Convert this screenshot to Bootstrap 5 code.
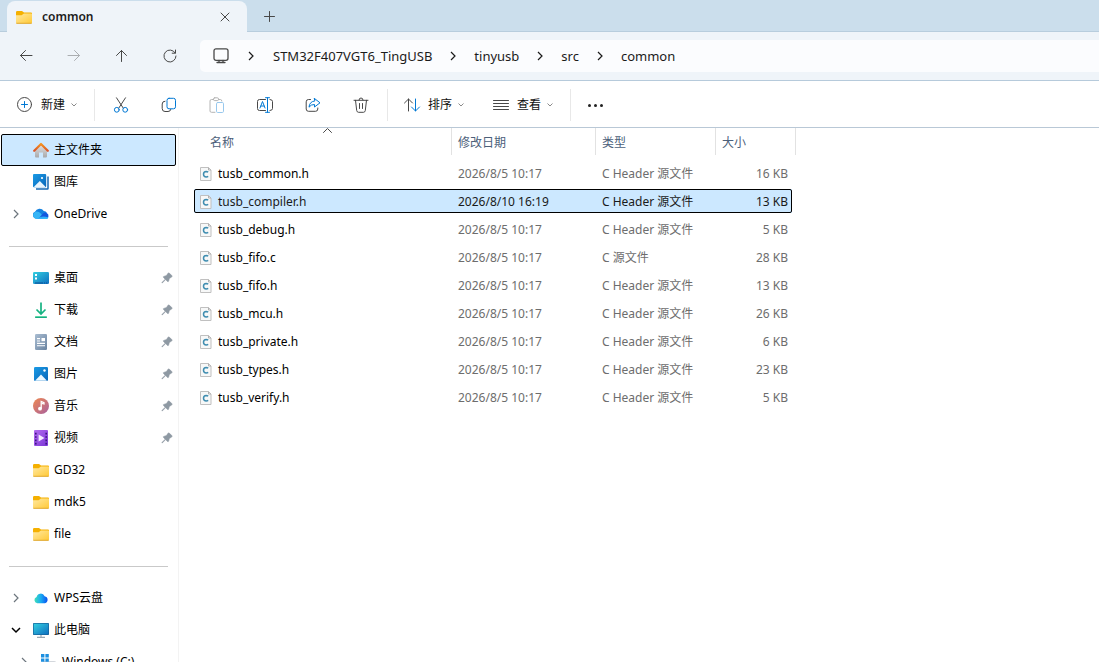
<!DOCTYPE html>
<html lang="zh-CN">
<head>
<meta charset="utf-8">
<meta name="viewport" content="width=device-width, initial-scale=1">
<title>common</title>
<link href="https://cdn.jsdelivr.net/npm/bootstrap@5.3.0/dist/css/bootstrap.min.css" rel="stylesheet">
<style>
  body { font-family: "Noto Sans", "Noto Sans CJK SC", sans-serif; font-size: 12px; line-height: 16px; color: #000; background: #fff; }
  svg { display: block; flex: none; }
  button { color: inherit; }
  .plain-btn { border: 0; background: none; padding: 0; display: flex; align-items: center; justify-content: center; }
  .plain-btn:hover { background: rgba(0, 0, 0, .05); }
  .plain-btn:disabled { opacity: .4; }
  .line-icon { fill: none; stroke: #484848; stroke-width: 1; stroke-linecap: round; stroke-linejoin: round; }
  .line-icon .accent { stroke: #0078d4; }

  .tab-strip { height: 32px; background: #cbdeec; box-shadow: inset 0 -1px #b8cddd; padding-left: 7px; }
  .file-tab { width: 240px; margin-top: 1px; padding: 0 14px 0 9px; gap: 10px; background: #eff4f9; border-radius: 8px 8px 0 0; font-weight: 600; color: #1b1b1b; }
  .new-tab { width: 44px; }

  .nav-strip { height: 49px; background: #eff4f9; border-bottom: 1px solid #b6cadb; padding-left: 2px; }
  .nav-strip .plain-btn { width: 48px; height: 32px; }
  .address { height: 32px; margin-left: 6px; padding-left: 13px; background: #fbfcfe; border-radius: 5px 0 0 5px; font-size: 13px; color: #1b1b1b; }
  .address a { color: inherit; text-decoration: none; }
  .crumb-sep { width: 42px; display: flex; justify-content: center; }
  .crumb-sep:first-of-type { width: 44px; }

  .command-strip { height: 47px; padding: 2px 0 0 3px; border-bottom: 1px solid #b9c8d6; color: #111; }
  .command-strip .icon-btn { width: 48px; height: 32px; }
  .text-btn { height: 32px; min-width: 89px; padding-left: 14px; gap: 6px; justify-content: flex-start; }
  .rule-v { width: 1px; height: 32px; margin: 0 2px; background: #e8e8e8; }

  .side-pane { width: 179px; padding-top: 6px; border-right: 1px solid #f3f3f3; }
  .side-item { height: 32px; padding: 0 3px 0 9px; color: #000; text-decoration: none; border: 1px solid transparent; margin: 0 2px 0 1px; }
  .side-item .twist { width: 10px; height: 10px; margin-right: 12px; }
  .side-item .glyph { width: 16px; height: 16px; margin-right: 5px; }
  .side-item.current { background: #cce8ff; border-color: #000; border-radius: 2px; }
  .side-item.nested { padding-left: 17px; }
  .side-rule { height: 32px; padding: 0 10px 0 9px; }
  .side-rule hr { margin: 0; border-color: #c9c9c9; opacity: 1; }
  .pin { margin-left: auto; margin-right: -1px; }

  .file-list { width: 598px; margin: -4px 0 0 15px; table-layout: fixed; border-collapse: separate; border-spacing: 0 4px; }
  .file-list th { position: relative; height: 29px; padding: 0 6px; font-weight: 400; color: #4c607a; }
  .file-list th::after { content: ""; position: absolute; right: 0; top: 0; width: 1px; height: 27px; background: #e2e2e2; }
  .file-list th:last-child::after { right: -4px; }
  .file-list th:first-child { padding-left: 16px; }
  .file-list td { height: 24px; padding: 1px 4px 0 6px; color: #6d6d6d; white-space: nowrap; }
  .file-list td:first-child { color: #000; }
  .file-list td:last-child { text-align: right; }
  .file-list tr.picked { background: #cce8ff; outline: 1px solid #000; outline-offset: -1px; border-radius: 2px; }
  .file-list tr.picked td { color: #1a1a1a; }
  .file-cell { display: flex; align-items: center; gap: 6px; }
  .col-name { width: 258px; }
  .col-date { width: 144px; }
  .col-type { width: 120px; }
  .sort-mark { position: absolute; left: 129px; top: 0; }
</style>
</head>
<body class="vh-100 overflow-hidden d-flex flex-column">

<svg width="0" height="0" class="position-absolute" aria-hidden="true">
  <defs>
    <linearGradient id="gFolder" x1="0" y1="0" x2="1" y2="1"><stop offset="0" stop-color="#ffe9a3"/><stop offset="1" stop-color="#ffc936"/></linearGradient>
    <linearGradient id="gBlue" x1="0" y1="0" x2="1" y2="1"><stop offset="0" stop-color="#1a9be6"/><stop offset="1" stop-color="#0a66b8"/></linearGradient>
    <linearGradient id="gTeal" x1="0" y1="0" x2="1" y2="1"><stop offset="0" stop-color="#33cfe0"/><stop offset="1" stop-color="#0f6fc0"/></linearGradient>
    <linearGradient id="gHome" x1="0" y1="0" x2="0" y2="1"><stop offset="0" stop-color="#e2e2e2"/><stop offset="1" stop-color="#a9a9ab"/></linearGradient>
    <linearGradient id="gRoof" x1="0" y1="0" x2="0" y2="1"><stop offset="0" stop-color="#f5921e"/><stop offset="1" stop-color="#d9552b"/></linearGradient>
    <linearGradient id="gDown" x1="0" y1="0" x2="0" y2="1"><stop offset="0" stop-color="#2fcf8c"/><stop offset="1" stop-color="#0fa37f"/></linearGradient>
    <linearGradient id="gDoc" x1="0" y1="0" x2="1" y2="1"><stop offset="0" stop-color="#a9bdd2"/><stop offset="1" stop-color="#6a83a0"/></linearGradient>
    <linearGradient id="gMusic" x1="0" y1="0" x2="1" y2="1"><stop offset="0" stop-color="#f0894f"/><stop offset="1" stop-color="#a7609f"/></linearGradient>
    <linearGradient id="gVideo" x1="0" y1="0" x2="1" y2="1"><stop offset="0" stop-color="#b36bf0"/><stop offset="1" stop-color="#7a35d6"/></linearGradient>
    <linearGradient id="gWps" x1="0" y1="0" x2="1" y2="0"><stop offset="0" stop-color="#3fe0b8"/><stop offset=".5" stop-color="#18a9f2"/><stop offset="1" stop-color="#0a50f0"/></linearGradient>
    <linearGradient id="gDrive" x1="0" y1="0" x2="1" y2="1"><stop offset="0" stop-color="#2c9cf5"/><stop offset="1" stop-color="#35c4fb"/></linearGradient>
  </defs>
  <symbol id="folder" viewBox="0 0 16 16"><path d="M0 3.200Q0 2 1.200 2H6l2 1.500h7Q16 3.500 16 4.500V8H0Z" fill="#f5b000"/><path d="M0 6.200h5.600L8 4.400h7.200q.8 0 .8.8v8.300Q16 14.500 15 14.500H1q-1 0-1-1Z" fill="url(#gFolder)"/><path d="M.3 14.300h15.400" stroke="#dda326" stroke-width=".9"/></symbol>
  <symbol id="home" viewBox="0 0 16 16"><path d="M2 8 8 2.500 14 8v6.500q0 1-1 1h-3V10.500H6v5H3q-1 0-1-1Z" fill="url(#gHome)"/><path d="M1.200 8.800 8 2l6.800 6.800" fill="none" stroke="url(#gRoof)" stroke-width="2.200" stroke-linecap="round" stroke-linejoin="round"/></symbol>
  <symbol id="gallery" viewBox="0 0 16 16"><path d="M15 2.500V14.500Q15 15 14.500 15H3" fill="none" stroke="#1769b3" stroke-width="1.500"/><rect width="13.200" height="13.200" rx="1" fill="url(#gBlue)"/><path d="M1 12.800 6.800 7 12.500 12.800Q12 13.200 11 13.200H2Z" fill="#e9f6ff"/><circle cx="9" cy="4" r="1.100" fill="#fff"/></symbol>
  <symbol id="onedrive" viewBox="0 0 16 16"><path d="M3.500 12.500A3.500 3.500 0 0 1 2 5.800 5 5 0 0 1 10.800 5 4 4 0 0 1 14 7L8 12.500Z" fill="#1482e0"/><path d="M1 11.500A3.600 3.600 0 0 1 3.700 5.600Q6 5.500 8 7.800L11 12 8 13H4Q2 13 1 11.500Z" fill="#37b5f5"/><path d="M5 13 10 7.600Q12 5.800 14 7.300A3.100 3.100 0 0 1 13 13Z" fill="#1158de"/><path d="M4 13Q8 9 15.500 11.500 15 13 13 13Z" fill="url(#gDrive)"/></symbol>
  <symbol id="desktop" viewBox="0 0 16 16"><rect y="2" width="16" height="12" rx="1.200" fill="url(#gTeal)"/><path d="M2 4h2v2H2zM2 7.500h2v2H2z" fill="#fff"/><path d="M2 13h8M11 13h1M13 13h1" stroke="#0d4f96" stroke-width="1"/></symbol>
  <symbol id="download" viewBox="0 0 16 16"><path d="M8 .5V11.500M3.500 7.500 8 12l4.500-4.500" fill="none" stroke="#16b282" stroke-width="1.700"/><rect x="2" y="14.200" width="12" height="1.700" rx=".6" fill="url(#gDown)"/></symbol>
  <symbol id="doc" viewBox="0 0 16 16"><rect x="2" width="12" height="16" rx="1.200" fill="url(#gDoc)"/><path d="M4 4.600h3M4 7h3M4 9.400h8M4 11.800h8" stroke="#fff" stroke-width="1.100"/><rect x="8.500" y="4" width="3.500" height="3.200" fill="#fff"/></symbol>
  <symbol id="picture" viewBox="0 0 16 16"><rect x="1" y="1" width="14" height="14" rx="1.200" fill="url(#gBlue)"/><path d="M2 14.800 8 8.500 14 14.800Z" fill="#eef8ff"/><circle cx="11.500" cy="4.500" r="1.200" fill="#fff"/></symbol>
  <symbol id="music" viewBox="0 0 16 16"><circle cx="8" cy="8" r="8" fill="url(#gMusic)"/><circle cx="7" cy="10.700" r="1.900" fill="#fff"/><path d="M8.200 10.700V3.500L11 4.600V6L9 5.400" fill="none" stroke="#fff" stroke-width="1.300"/></symbol>
  <symbol id="video" viewBox="0 0 16 16"><rect x="1" width="14" height="16" rx="1" fill="url(#gVideo)"/><path d="M5.600 4.500 11.500 8 5.600 11.500Z" fill="#f3eaff"/><path d="M2 2.800h1.600v1.600H2zM2 6.200h1.600v1.600H2zM2 9.600h1.600v1.600H2zM2 12.800h1.600v1.600H2zM12.400 2.800H14v1.600h-1.600zM12.400 6.200H14v1.600h-1.600zM12.400 9.600H14v1.600h-1.600zM12.400 12.800H14v1.600h-1.600z" fill="#3d1480"/></symbol>
  <symbol id="wps" viewBox="0 0 16 16"><path d="M4.200 13.200A3.200 3.200 0 0 1 3.600 7 4.200 4.200 0 0 1 11.600 6.200 3.600 3.600 0 0 1 12 13.200Z" fill="url(#gWps)"/></symbol>
  <symbol id="pc" viewBox="0 0 16 16"><rect y="1" width="16" height="12" rx=".8" fill="#15639b"/><rect x=".7" y="1.700" width="14.600" height="10.600" fill="url(#gTeal)"/><path d="M8 13v2M4 15.300h8" stroke="#9aa7b2" stroke-width="1.200"/></symbol>
  <symbol id="windisk" viewBox="0 0 16 16"><path d="M1 9Q1 7 3 7h10Q15 7 15.500 9l.5 4H0Z" fill="#d3d7dc"/><path d="M0 0h3.400v3.400H0zM4.400 0h3.400v3.400H4.400zM0 4.400h3.400v3.400H0zM4.400 4.400h3.400v3.400H4.400z" fill="#1c8fe0"/></symbol>
  <symbol id="pinned" viewBox="0 0 12 12"><path d="M7 1.200Q7.800.6 8.500 1.300L10.800 3.600Q11.400 4.400 10.700 5L8.300 6.500 7.600 9.200Q7.200 10 6.500 9.400L4.600 7.600 1.600 10.700.9 10.900 1.200 10.200 4.200 7.200 2.500 5.400Q2 4.600 2.800 4.400L5.500 3.600Z" fill="#8e99a3" stroke="#8e99a3" stroke-width=".6"/></symbol>
  <symbol id="cfile" viewBox="0 0 12 14"><path d="M.5.5H8.500L11 3V13.500H.5Z" fill="#f7f8f8" stroke="#c0c0c0"/><path d="M8.500.5V3H11" fill="none" stroke="#b0b0b0"/><path d="M8.200 5.200Q7.300 4.500 6.200 4.500 3.500 4.700 3.500 7.300 3.600 9.900 6.200 10 7.400 10 8.200 9.400" fill="none" stroke="#3f8db0" stroke-width="1.500"/></symbol>
  <symbol id="chev-r" viewBox="0 0 10 10"><path d="M3 1 7 5 3 9" fill="none" stroke="currentColor" stroke-width="1.200"/></symbol>
  <symbol id="chev-d" viewBox="0 0 10 10"><path d="M1 3 5 7 9 3" fill="none" stroke="currentColor" stroke-width="1.500"/></symbol>
  <symbol id="chev-s" viewBox="0 0 6 6"><path d="M.5 1.500 3 4 5.500 1.500" fill="none" stroke="#8a8a8a"/></symbol>
</svg>

<header>
  <div class="tab-strip d-flex">
    <div class="file-tab d-flex align-items-center">
      <svg width="16" height="16"><use href="#folder"/></svg>
      <span class="me-auto">common</span>
      <button class="plain-btn" aria-label="关闭"><svg class="line-icon" width="16" height="16"><path d="M4 4 12 12M12 4 4 12"/></svg></button>
    </div>
    <button class="plain-btn new-tab" aria-label="新标签页"><svg class="line-icon" width="16" height="16"><path d="M8.500 3.500V13.500M3.500 8.500H13.500"/></svg></button>
  </div>

  <div class="nav-strip d-flex align-items-center">
    <button class="plain-btn" aria-label="后退"><svg class="line-icon" width="16" height="16"><path d="M14 7.500H2.500M7.500 2.500 2.500 7.500l5 5"/></svg></button>
    <button class="plain-btn" aria-label="前进" disabled><svg class="line-icon" width="16" height="16"><path d="M2 7.500H13.500M8.500 2.500l5 5-5 5"/></svg></button>
    <button class="plain-btn" aria-label="向上"><svg class="line-icon" width="16" height="16"><path d="M7.500 13.500V2.500M2.500 7.500 7.500 2.500 12.500 7.500"/></svg></button>
    <button class="plain-btn" aria-label="刷新"><svg class="line-icon" width="16" height="16"><path d="M13.200 5A6 6 0 1 0 14 8M13.500 2V5.200H10.200"/></svg></button>
    <nav class="address flex-grow-1 d-flex align-items-center" aria-label="路径">
      <svg class="line-icon" width="16" height="16"><rect x="1" y=".8" width="14" height="11.500" rx="2" stroke-width="1.300"/><path d="M6 12.500V14M10 12.500V14M4 14.500H12" stroke-width="1.300"/></svg>
      <span class="crumb-sep"><svg width="10" height="10"><use href="#chev-r"/></svg></span>
      <a href="#">STM32F407VGT6_TingUSB</a>
      <span class="crumb-sep"><svg width="10" height="10"><use href="#chev-r"/></svg></span>
      <a href="#">tinyusb</a>
      <span class="crumb-sep"><svg width="10" height="10"><use href="#chev-r"/></svg></span>
      <a href="#">src</a>
      <span class="crumb-sep"><svg width="10" height="10"><use href="#chev-r"/></svg></span>
      <a href="#">common</a>
    </nav>
  </div>

  <div class="command-strip d-flex align-items-center">
    <button class="plain-btn text-btn"><svg class="line-icon" width="18" height="16"><circle cx="7.500" cy="7.500" r="7"/><path class="accent" d="M7.500 4.500V10.500M4.500 7.500H10.500"/></svg><span>新建</span><svg width="6" height="6"><use href="#chev-s"/></svg></button>
    <span class="rule-v"></span>
    <button class="plain-btn icon-btn" aria-label="剪切"><svg class="line-icon" width="16" height="16"><path d="M3.500.8 10.200 11M12.500.8 5.800 11"/><circle class="accent" cx="3.800" cy="12.800" r="2.400"/><circle class="accent" cx="12.200" cy="12.800" r="2.400"/></svg></button>
    <button class="plain-btn icon-btn" aria-label="复制"><svg class="line-icon" width="16" height="16"><path d="M4 4.200Q1.200 4.200 1.200 7v4.500Q1.200 14.500 4 14.500H7Q9.500 14.500 9.800 12.500"/><rect class="accent" x="6" y="1.300" width="8.500" height="10.500" rx="2"/></svg></button>
    <button class="plain-btn icon-btn" aria-label="粘贴" disabled><svg class="line-icon" width="16" height="16"><path d="M4.500 2.500H2.500Q1 2.500 1 4V14Q1 15.300 2.500 15.300H6M9.500 2.500H11.500Q12.800 2.500 12.800 4"/><rect x="4.500" y=".8" width="5" height="2.800" rx="1.200"/><rect class="accent" x="7.500" y="5.500" width="7" height="10" rx="1.200"/></svg></button>
    <button class="plain-btn icon-btn" aria-label="重命名"><svg class="line-icon" width="18" height="16"><path d="M9.500 2.500H3.500Q1.500 2.500 1.500 4.500V11.500Q1.500 13.500 3.500 13.500H9.500M14 2.500Q16.500 2.500 16.500 4.500V11.500Q16.500 13.500 14 13.500"/><path class="accent" d="M11.500.7V15.300M9.500 .7H13.500M9.500 15.300H13.500M4 11 6.500 4.500 9 11M5 9H8"/></svg></button>
    <button class="plain-btn icon-btn" aria-label="共享"><svg class="line-icon" width="16" height="16"><path d="M5.500 2.500H3.500Q1.200 2.500 1.200 4.800V12Q1.200 14.300 3.500 14.300H10.500Q12.800 14.300 12.800 12V11"/><path class="accent" d="M9.500 1.500 15 5.800 9.500 10V7.500Q6 7.300 4 10.200 4.500 4.500 9.500 4Z"/></svg></button>
    <button class="plain-btn icon-btn" aria-label="删除"><svg class="line-icon" width="16" height="16"><path d="M1 3.300H15M2.500 3.300 3.700 13.500Q4 15.300 5.500 15.300H10.500Q12 15.300 12.300 13.500L13.500 3.300M6 3Q6 1 8 1T10 3M6.500 6.500V11.500M9.500 6.500V11.500"/></svg></button>
    <span class="rule-v"></span>
    <button class="plain-btn text-btn"><svg class="line-icon" width="18" height="16"><path d="M4.500 14V2M.5 6 4.500 2l4 4"/><path class="accent" d="M11.500 2V14M7.500 10l4 4 4-4"/></svg><span>排序</span><svg width="6" height="6"><use href="#chev-s"/></svg></button>
    <button class="plain-btn text-btn"><svg class="line-icon" width="18" height="16"><path d="M.5 3.500H15.500M.5 6.500H15.500M.5 9.500H15.500M.5 12.500H15.500"/></svg><span>查看</span><svg width="6" height="6"><use href="#chev-s"/></svg></button>
    <span class="rule-v"></span>
    <button class="plain-btn icon-btn" aria-label="更多"><svg width="18" height="16" fill="#222"><circle cx="1.500" cy="8.500" r="1.500"/><circle cx="7.500" cy="8.500" r="1.500"/><circle cx="13.500" cy="8.500" r="1.500"/></svg></button>
  </div>
</header>

<div class="d-flex flex-grow-1 overflow-hidden">
  <nav class="side-pane flex-shrink-0 overflow-hidden" aria-label="导航窗格">
    <a href="#" class="side-item d-flex align-items-center current"><span class="twist"></span><svg class="glyph"><use href="#home"/></svg>主文件夹</a>
    <a href="#" class="side-item d-flex align-items-center"><span class="twist"></span><svg class="glyph"><use href="#gallery"/></svg>图库</a>
    <a href="#" class="side-item d-flex align-items-center"><svg class="twist text-secondary"><use href="#chev-r"/></svg><svg class="glyph"><use href="#onedrive"/></svg>OneDrive</a>
    <div class="side-rule d-flex flex-column justify-content-center"><hr></div>
    <a href="#" class="side-item d-flex align-items-center"><span class="twist"></span><svg class="glyph"><use href="#desktop"/></svg>桌面<svg class="pin" width="12" height="12"><use href="#pinned"/></svg></a>
    <a href="#" class="side-item d-flex align-items-center"><span class="twist"></span><svg class="glyph"><use href="#download"/></svg>下载<svg class="pin" width="12" height="12"><use href="#pinned"/></svg></a>
    <a href="#" class="side-item d-flex align-items-center"><span class="twist"></span><svg class="glyph"><use href="#doc"/></svg>文档<svg class="pin" width="12" height="12"><use href="#pinned"/></svg></a>
    <a href="#" class="side-item d-flex align-items-center"><span class="twist"></span><svg class="glyph"><use href="#picture"/></svg>图片<svg class="pin" width="12" height="12"><use href="#pinned"/></svg></a>
    <a href="#" class="side-item d-flex align-items-center"><span class="twist"></span><svg class="glyph"><use href="#music"/></svg>音乐<svg class="pin" width="12" height="12"><use href="#pinned"/></svg></a>
    <a href="#" class="side-item d-flex align-items-center"><span class="twist"></span><svg class="glyph"><use href="#video"/></svg>视频<svg class="pin" width="12" height="12"><use href="#pinned"/></svg></a>
    <a href="#" class="side-item d-flex align-items-center"><span class="twist"></span><svg class="glyph"><use href="#folder"/></svg>GD32</a>
    <a href="#" class="side-item d-flex align-items-center"><span class="twist"></span><svg class="glyph"><use href="#folder"/></svg>mdk5</a>
    <a href="#" class="side-item d-flex align-items-center"><span class="twist"></span><svg class="glyph"><use href="#folder"/></svg>file</a>
    <div class="side-rule d-flex flex-column justify-content-center"><hr></div>
    <a href="#" class="side-item d-flex align-items-center"><svg class="twist text-secondary"><use href="#chev-r"/></svg><svg class="glyph"><use href="#wps"/></svg>WPS云盘</a>
    <a href="#" class="side-item d-flex align-items-center"><svg class="twist"><use href="#chev-d"/></svg><svg class="glyph"><use href="#pc"/></svg>此电脑</a>
    <a href="#" class="side-item nested d-flex align-items-center"><svg class="twist text-secondary"><use href="#chev-r"/></svg><svg class="glyph"><use href="#windisk"/></svg>Windows (C:)</a>
  </nav>

  <main class="flex-grow-1">
    <table class="file-list">
      <colgroup><col class="col-name"><col class="col-date"><col class="col-type"><col></colgroup>
      <thead>
        <tr><th scope="col">名称<svg class="sort-mark line-icon" width="9" height="6"><path d="M.5 4.500 4.500.5 8.500 4.500"/></svg></th><th scope="col">修改日期</th><th scope="col">类型</th><th scope="col">大小</th></tr>
      </thead>
      <tbody>
        <tr><td><div class="file-cell"><svg width="12" height="14"><use href="#cfile"/></svg>tusb_common.h</div></td><td>2026/8/5 10:17</td><td>C Header 源文件</td><td>16 KB</td></tr>
        <tr class="picked"><td><div class="file-cell"><svg width="12" height="14"><use href="#cfile"/></svg>tusb_compiler.h</div></td><td>2026/8/10 16:19</td><td>C Header 源文件</td><td>13 KB</td></tr>
        <tr><td><div class="file-cell"><svg width="12" height="14"><use href="#cfile"/></svg>tusb_debug.h</div></td><td>2026/8/5 10:17</td><td>C Header 源文件</td><td>5 KB</td></tr>
        <tr><td><div class="file-cell"><svg width="12" height="14"><use href="#cfile"/></svg>tusb_fifo.c</div></td><td>2026/8/5 10:17</td><td>C 源文件</td><td>28 KB</td></tr>
        <tr><td><div class="file-cell"><svg width="12" height="14"><use href="#cfile"/></svg>tusb_fifo.h</div></td><td>2026/8/5 10:17</td><td>C Header 源文件</td><td>13 KB</td></tr>
        <tr><td><div class="file-cell"><svg width="12" height="14"><use href="#cfile"/></svg>tusb_mcu.h</div></td><td>2026/8/5 10:17</td><td>C Header 源文件</td><td>26 KB</td></tr>
        <tr><td><div class="file-cell"><svg width="12" height="14"><use href="#cfile"/></svg>tusb_private.h</div></td><td>2026/8/5 10:17</td><td>C Header 源文件</td><td>6 KB</td></tr>
        <tr><td><div class="file-cell"><svg width="12" height="14"><use href="#cfile"/></svg>tusb_types.h</div></td><td>2026/8/5 10:17</td><td>C Header 源文件</td><td>23 KB</td></tr>
        <tr><td><div class="file-cell"><svg width="12" height="14"><use href="#cfile"/></svg>tusb_verify.h</div></td><td>2026/8/5 10:17</td><td>C Header 源文件</td><td>5 KB</td></tr>
      </tbody>
    </table>
  </main>
</div>

<script src="https://cdn.jsdelivr.net/npm/bootstrap@5.3.0/dist/js/bootstrap.bundle.min.js"></script>
</body>
</html>
